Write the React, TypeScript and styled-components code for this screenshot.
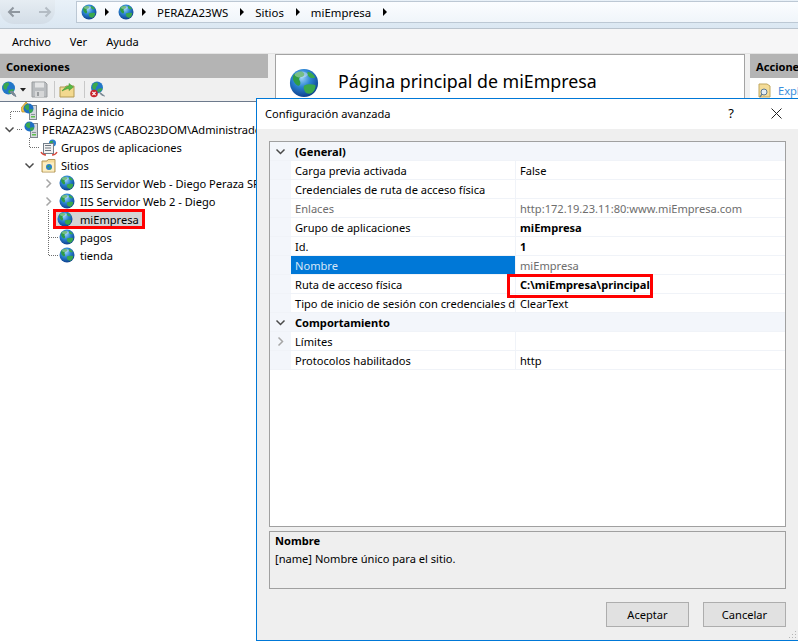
import React, { useId } from "react";
import styled, { createGlobalStyle } from "styled-components";

const Global = createGlobalStyle`
  html, body { margin: 0; padding: 0; height: 100%; overflow: hidden; background: #f0f0f0; }
  body { font-family: "Noto Sans", "Open Sans", sans-serif; font-size: 11.1px; color: #000; }
  #root { width: 798px; height: 641px; }
  * { box-sizing: border-box; }
`;

const Page = styled.div`
  position: relative;
  width: 798px;
  height: 641px;
  overflow: hidden;
  display: flex;
  flex-direction: column;
`;

/* ---- top navigation ---- */
const NavBar = styled.div`
  height: 29px;
  flex: none;
  display: flex;
  align-items: flex-start;
  background: linear-gradient(#e9f1f8, #dbe7f2);
  border-bottom: 1px solid #b9c3cd;
`;
const BackForward = styled.div`
  width: 55px;
  height: 24px;
  margin-right: 21px;
  flex: none;
  display: flex;
  align-items: center;
  justify-content: space-between;
  padding: 0 3px 0 7px;
  background: linear-gradient(#e6edf3, #d3dde7);
  border-radius: 0 0 14px 14px;
`;
const AddressBox = styled.div`
  flex: 1;
  height: 22px;
  margin-top: 1px;
  display: flex;
  align-items: center;
  padding-left: 4px;
  background: linear-gradient(#fbfdff, #f0f5fa);
  border: 1px solid #bcc8d4;
  border-right: none;
`;
const Crumb = styled.span`
  font-size: 11.4px;
  margin-right: 12px;
  white-space: nowrap;
`;
const CrumbArrow = styled.span<{ $gap: number }>`
  width: 0;
  height: 0;
  margin-right: ${(p) => p.$gap}px;
  border-left: 4px solid #000;
  border-top: 4px solid transparent;
  border-bottom: 4px solid transparent;
`;
const CrumbGlobe = styled.span`
  display: flex;
  margin-right: 8px;
`;

const MenuBar = styled.div`
  height: 25px;
  flex: none;
  display: flex;
  align-items: center;
  gap: 19px;
  padding-left: 12px;
  background: #f6f6f7;
  border-bottom: 1px solid #e4e4e4;
`;
const MenuItem = styled.span`
  font-size: 11.1px;
`;

/* ---- workspace behind the dialog ---- */
const Workspace = styled.div`
  flex: 1;
  display: flex;
  min-height: 0;
  background: #f0f0f0;
`;
const ConnectionsPanel = styled.section`
  width: 268px;
  flex: none;
  display: flex;
  flex-direction: column;
  background: #fff;
`;
const PanelHeader = styled.header`
  height: 24px;
  flex: none;
  display: flex;
  align-items: center;
  padding-left: 6px;
  background: #b4b4b4;
  font-weight: 700;
  font-size: 11.1px;
  white-space: nowrap;
  overflow: hidden;
`;
const Toolbar = styled.div`
  height: 24px;
  flex: none;
  display: flex;
  align-items: center;
  background: #f0f0f0;
  border-bottom: 1px solid #6d7a8c;
`;
const ToolSlot = styled.span<{ $w: number }>`
  display: flex;
  width: ${(p) => p.$w}px;
  flex: none;
  justify-content: center;
`;
const ToolSep = styled.span`
  width: 1px;
  height: 17px;
  background: #c8c8c8;
  flex: none;
`;
const Tree = styled.div`
  display: flex;
  flex-direction: column;
`;
const TreeRow = styled.div`
  height: 18px;
  display: flex;
  align-items: center;
  white-space: nowrap;
`;
const TreeIcon = styled.span<{ $w: number }>`
  display: flex;
  width: ${(p) => p.$w}px;
  flex: none;
  align-items: center;
`;
const TreeLabel = styled.span`
  font-size: 11.1px;
`;
const SelectedNode = styled.span`
  display: flex;
  align-items: center;
  height: 14px;
  width: 86px;
  padding-left: 1px;
  background: #d4d4d4;
  outline: 3px solid #f00;
`;

const MainPanel = styled.section`
  width: 470px;
  margin-left: 7px;
  flex: none;
  background: #fff;
  border: 1px solid #a3a3a3;
  display: flex;
  align-items: flex-start;
  padding: 13px 0 0 13px;
`;
const PageTitle = styled.h1`
  margin: 1px 0 0 19px;
  font-size: 17.8px;
  line-height: 24px;
  font-weight: 400;
  white-space: nowrap;
`;
const ActionsPanel = styled.section`
  width: 48px;
  margin-left: 5px;
  flex: none;
  background: #fff;
  display: flex;
  flex-direction: column;
  overflow: hidden;
`;
const ActionLink = styled.div`
  display: flex;
  align-items: center;
  gap: 7px;
  padding: 5px 0 0 8px;
  color: #3c8fdc;
  font-size: 11.1px;
`;

/* ---- dialog ---- */
const Dialog = styled.div`
  position: absolute;
  left: 256px;
  top: 98px;
  width: 543px;
  height: 543px;
  background: #efefef;
  border: 1px solid #0078d7;
  display: flex;
  flex-direction: column;
`;
const TitleBar = styled.div`
  height: 30px;
  flex: none;
  background: #fff;
  display: flex;
  align-items: center;
  padding: 0 0 2px 8px;
`;
const DialogTitle = styled.span`
  flex: 1;
  font-size: 11.1px;
`;
const HelpGlyph = styled.span`
  width: 46px;
  text-align: center;
  font-size: 13px;
`;
const CloseGlyph = styled.span`
  display: flex;
  width: 44px;
  justify-content: center;
`;
const DialogBody = styled.div`
  flex: 1;
  display: flex;
  flex-direction: column;
  padding: 12px 12px 9px 12px;
  min-height: 0;
`;
const Grid = styled.div`
  height: 386px;
  flex: none;
  background: #fff;
  border: 1px solid #a0a0a0;
  display: flex;
  flex-direction: column;
`;
const Row = styled.div<{ $category?: boolean }>`
  height: 19px;
  flex: none;
  display: grid;
  grid-template-columns: 21px 225px 1fr;
  align-items: stretch;
  border-bottom: 1px solid #f0f3f8;
  background: ${(p) => (p.$category ? "#f3f6fb" : "#fff")};
`;
const Gutter = styled.span`
  background: #f3f6fb;
  display: flex;
  align-items: center;
  justify-content: center;
`;
const NameCell = styled.span<{ $selected?: boolean; $muted?: boolean; $category?: boolean }>`
  display: flex;
  align-items: center;
  padding-left: 4px;
  white-space: nowrap;
  overflow: hidden;
  font-size: 11.1px;
  font-weight: ${(p) => (p.$category ? 700 : 400)};
  color: ${(p) => (p.$selected ? "#d5e7f8" : p.$muted ? "#6d6d6d" : "#000")};
  background: ${(p) => (p.$selected ? "#0078d7" : "transparent")};
  border-right: ${(p) => (p.$category ? "none" : "1px solid #f0f3f8")};
`;
const ValueCell = styled.span<{ $bold?: boolean; $muted?: boolean }>`
  position: relative;
  display: flex;
  align-items: center;
  padding-left: 4px;
  white-space: nowrap;
  font-size: 11.1px;
  font-weight: ${(p) => (p.$bold ? 700 : 400)};
  color: ${(p) => (p.$muted ? "#6d6d6d" : "#000")};
`;
const RedMark = styled.span`
  position: absolute;
  left: -9px;
  top: -1px;
  width: 146px;
  height: 24px;
  border: 3px solid #f00;
  pointer-events: none;
`;
const DescriptionBox = styled.div`
  height: 58px;
  flex: none;
  margin-top: 4px;
  border: 1px solid #a0a0a0;
  padding: 1px 5px;
  display: flex;
  flex-direction: column;
  gap: 2px;
  font-size: 11.1px;
`;
const DescTitle = styled.strong`
  font-weight: 700;
  line-height: 16px;
`;
const DescText = styled.span`
  line-height: 16px;
`;
const Buttons = styled.div`
  display: flex;
  justify-content: flex-end;
  gap: 14px;
  margin-top: 13px;
`;
const Button = styled.button`
  width: 83px;
  height: 25px;
  padding: 0;
  background: #e1e1e1;
  border: 1px solid #adadad;
  font-family: inherit;
  font-size: 11.1px;
  color: #000;
`;
const Grip = styled.svg`
  position: absolute;
  right: 1px;
  bottom: 1px;
`;

/* ---- drawings ---- */
const GlobeIcon = ({ size = 16 }: { size?: number }) => {
  const id = useId();
  return (
    <svg width={size} height={size} viewBox="0 0 32 32" style={{ flex: "none" }}>
      <defs>
        <radialGradient id={id} cx="42%" cy="32%" r="72%">
          <stop offset="0" stopColor="#9bd2f7" />
          <stop offset="0.45" stopColor="#2a83d3" />
          <stop offset="1" stopColor="#0b3a86" />
        </radialGradient>
      </defs>
      <circle cx="16" cy="16" r="15" fill={`url(#${id})`} />
      <path d="M5 7c3-2 6-4 9-3 2 1 3 2 2 4-1 2-4 1-5 3s2 3 1 6-3 2-5 0-4-6-2-10z" fill="#2f9c46" />
      <path d="M16 19c3-2 8-2 12-1 1 2-1 7-4 9-3 1-6 0-7-2s-2-4-1-6z" fill="#3aa84d" />
      <path d="M20 4c3 0 6 3 8 6-2 1-5 1-7-1-1-1-2-3-1-5z" fill="#3aa84d" />
      <ellipse cx="13" cy="7" rx="7" ry="3.2" fill="#ffffff" opacity="0.35" />
    </svg>
  );
};

const ServerIcon = ({ home }: { home?: boolean }) => (
  <svg width="20" height="18" viewBox="0 0 20 18" style={{ flex: "none" }}>
    {home && <path d="M0 6 5 0l6 6v4H1z" fill="#f1c34a" stroke="#b98a1e" strokeWidth="0.7" />}
    <rect x="8.500" y="3.500" width="7" height="14" fill="#d5d9dd" stroke="#7e868e" />
    <rect x="10" y="14" width="4" height="1.500" fill="#5fbf4f" />
    <rect x="10" y="12" width="4" height="1" fill="#8a929a" />
    <g transform="translate(2 1)">
      <circle cx="5.500" cy="5.500" r="5" fill="#1f6fc4" />
      <path d="M2 3c1-1 3-2 4-1s-1 2 0 3-1 3-2 2-3-2-2-4zM6 7c1-1 3-1 4-.5 0 1.500-1 3-2.500 3.500C6 9.500 5.500 8 6 7z" fill="#3aa84d" />
    </g>
  </svg>
);
const AppPoolIcon = () => (
  <svg width="18" height="17" viewBox="0 0 18 17" style={{ flex: "none" }}>
    <circle cx="12.500" cy="4" r="3.500" fill="#2a7fcf" />
    <path d="M10 2.500c1-1 3-1 3 0s-1 1.500-2 2-1.500-1-1-2z" fill="#3aa84d" />
    <rect x="3.500" y="4.500" width="10" height="10" fill="#f2f2f2" stroke="#76808a" />
    <path d="M5 6.500h6M5 9h6M5 11.500h6" stroke="#6e7881" strokeWidth="1" />
    <path d="M1 13c1 2 3 3 5 3M12 16c2 0 4-1 5-3" stroke="#d9473a" strokeWidth="1.400" fill="none" />
  </svg>
);
const SitesFolder = () => (
  <svg width="16" height="15" viewBox="0 0 16 15" style={{ flex: "none" }}>
    <path d="M1 3h5l1-1.500h7V14H1z" fill="#f6dc9a" stroke="#b3985a" />
    <rect x="2" y="4.500" width="11" height="9" fill="#fbeec4" />
    <circle cx="8" cy="9" r="3" fill="#2a7fcf" />
    <path d="M6.500 8c1-1 2-1 2 0s-1 1-1.500 1.500S6 9 6.500 8zM8.500 10c.7-.5 1.500-.5 2 0-.3.800-1 1.500-1.600 1.500-.5-.5-.7-1-.4-1.500z" fill="#3aa84d" />
  </svg>
);
const ConnectGlobe = () => (
  <svg width="17" height="17" viewBox="0 0 17 17">
    <circle cx="7.500" cy="7" r="6.500" fill="#2277c9" />
    <path d="M3 3c2-2 5-2 5 0s-2 2-2 4-2 2-3 1-1-3 0-5zM8 9c2-1 4-1 5-.5-.5 2-2 4-4 4S7 10 8 9z" fill="#3aa84d" />
    <path d="M9 11l3 3 3 1.500-1.500-3-2.500-2.500z" fill="#7c8a96" stroke="#7c8a96" />
  </svg>
);
const StopGlobe = () => (
  <svg width="17" height="17" viewBox="0 0 17 17">
    <circle cx="8" cy="6.500" r="6" fill="#2277c9" />
    <path d="M4 3c2-2 5-2 5 0s-2 2-2 4-2 2-3 1-1-3 0-5zM9 8c2-1 4-1 4.500-.5-.5 2-2 3.500-4 3.500S8 9 9 8z" fill="#3aa84d" />
    <path d="M10 11l3 2 2.500 2-3-1z" fill="#7c8a96" stroke="#7c8a96" />
    <circle cx="5" cy="12.500" r="3.800" fill="#c8242c" />
    <path d="M3.400 10.900l3.200 3.200M6.600 10.900l-3.200 3.200" stroke="#fff" strokeWidth="1.200" />
  </svg>
);
const Floppy = () => (
  <svg width="17" height="17" viewBox="0 0 17 17">
    <path d="M1 1h13l2 2v13H1z" fill="#b9bcbf" stroke="#9a9d9f" />
    <rect x="4" y="1.500" width="9" height="5" fill="#e4e5e6" />
    <rect x="4" y="10" width="9" height="6" fill="#d6d7d8" />
    <rect x="6" y="11" width="2" height="4" fill="#9a9d9f" />
  </svg>
);
const FolderUp = () => (
  <svg width="16" height="16" viewBox="0 0 16 16">
    <path d="M1 5h5l1-1h8v11H1z" fill="#f3d98f" stroke="#b39a55" />
    <path d="M3 9c2-3 5-5 7-5V1.500L14.500 5 10 8.500V6.500C8 6.500 5 8 3 9z" fill="#58b947" stroke="#3c8f2e" strokeWidth="0.5" />
  </svg>
);
const ExploreIcon = () => (
  <svg width="13" height="15" viewBox="0 0 13 15" style={{ flex: "none" }}>
    <path d="M1 1h8l3 2v11H1z" fill="#f4dc98" stroke="#c1a75f" />
    <circle cx="6" cy="9" r="3" fill="#e4eef6" stroke="#5d7a92" />
    <path d="M4 11l-2 3" stroke="#5d7a92" strokeWidth="1.300" />
  </svg>
);
const Chevron = ({ open, color = "#4a4a4a" }: { open?: boolean; color?: string }) => (
  <svg width="11" height="11" viewBox="0 0 11 11" style={{ flex: "none" }}>
    <path d={open ? "M1.500 3.500 5.500 7.500 9.500 3.500" : "M3.500 1.500 7.500 5.500 3.500 9.500"} fill="none" stroke={color} strokeWidth="1.500" />
  </svg>
);
/* Dotted connector lines of the tree, drawn at the head of each row. */
const TreeLines = ({ w, children }: { w: number; children?: React.ReactNode }) => (
  <svg width={w} height="18" viewBox={`0 0 ${w} 18`} style={{ flex: "none" }}>
    <g stroke="#6f6f6f" strokeDasharray="1 1" fill="none" shapeRendering="crispEdges">
      {children}
    </g>
  </svg>
);
const ArrowGlyph = ({ back }: { back?: boolean }) => (
  <svg width="14" height="12" viewBox="0 0 14 12">
    <path d={back ? "M13 6H2M6.500 1.500 2 6l4.500 4.500" : "M1 6h11M7.500 1.500 12 6l-4.500 4.500"} fill="none" stroke={back ? "#8f979f" : "#b4bcc4"} strokeWidth="2" />
  </svg>
);

const rows: { n: string; v?: string; bold?: boolean; muted?: boolean; sel?: boolean; valMuted?: boolean; cat?: boolean; more?: boolean; mark?: boolean }[] = [
  { n: "(General)", cat: true },
  { n: "Carga previa activada", v: "False" },
  { n: "Credenciales de ruta de acceso física", v: "" },
  { n: "Enlaces", v: "http:172.19.23.11:80:www.miEmpresa.com", muted: true, valMuted: true },
  { n: "Grupo de aplicaciones", v: "miEmpresa", bold: true },
  { n: "Id.", v: "1", bold: true },
  { n: "Nombre", v: "miEmpresa", sel: true, valMuted: true },
  { n: "Ruta de acceso física", v: "C:\\miEmpresa\\principal", bold: true, mark: true },
  { n: "Tipo de inicio de sesión con credenciales de ruta de acceso física", v: "ClearText" },
  { n: "Comportamiento", cat: true },
  { n: "Límites", v: "", more: true },
  { n: "Protocolos habilitados", v: "http" },
];

export default function App() {
  return (
    <Page>
      <Global />
      <NavBar>
        <BackForward>
          <ArrowGlyph back />
          <ArrowGlyph />
        </BackForward>
        <AddressBox>
          <CrumbGlobe><GlobeIcon size={16} /></CrumbGlobe>
          <CrumbArrow $gap={9} />
          <CrumbGlobe><GlobeIcon size={16} /></CrumbGlobe>
          <CrumbArrow $gap={11} />
          <Crumb>PERAZA23WS</Crumb>
          <CrumbArrow $gap={11} />
          <Crumb>Sitios</Crumb>
          <CrumbArrow $gap={11} />
          <Crumb>miEmpresa</Crumb>
          <CrumbArrow $gap={11} />
        </AddressBox>
      </NavBar>
      <MenuBar>
        <MenuItem>Archivo</MenuItem>
        <MenuItem>Ver</MenuItem>
        <MenuItem>Ayuda</MenuItem>
      </MenuBar>
      <Workspace>
        <ConnectionsPanel>
          <PanelHeader>Conexiones</PanelHeader>
          <Toolbar>
            <ToolSlot $w={18}><ConnectGlobe /></ToolSlot>
            <ToolSlot $w={10}>
              <svg width="6" height="4" viewBox="0 0 6 4"><path d="M0 0h6L3 3.500z" fill="#222" /></svg>
            </ToolSlot>
            <ToolSlot $w={23}><Floppy /></ToolSlot>
            <ToolSlot $w={3} />
            <ToolSep />
            <ToolSlot $w={24}><FolderUp /></ToolSlot>
            <ToolSlot $w={5} />
            <ToolSep />
            <ToolSlot $w={24}><StopGlobe /></ToolSlot>
          </Toolbar>
          <Tree>
            <TreeRow>
              <TreeLines w={21}><path d="M10.500 9.500V18M10.500 9.500H21" /></TreeLines>
              <TreeIcon $w={21}><ServerIcon home /></TreeIcon>
              <TreeLabel>Página de inicio</TreeLabel>
            </TreeRow>
            <TreeRow>
              <TreeIcon $w={4} />
              <Chevron open />
              <TreeLines w={7}><path d="M2 9.500H7" /></TreeLines>
              <TreeIcon $w={20}><ServerIcon /></TreeIcon>
              <TreeLabel>PERAZA23WS (CABO23DOM\Administrador)</TreeLabel>
            </TreeRow>
            <TreeRow>
              <TreeLines w={40}><path d="M29.500 0V9.500M29.500 9.500H40" /></TreeLines>
              <TreeIcon $w={21}><AppPoolIcon /></TreeIcon>
              <TreeLabel>Grupos de aplicaciones</TreeLabel>
            </TreeRow>
            <TreeRow>
              <TreeIcon $w={24} />
              <Chevron open />
              <TreeIcon $w={6} />
              <TreeIcon $w={20}><SitesFolder /></TreeIcon>
              <TreeLabel>Sitios</TreeLabel>
            </TreeRow>
            <TreeRow>
              <TreeIcon $w={43} />
              <Chevron color="#a6a6a6" />
              <TreeIcon $w={5} />
              <TreeIcon $w={21}><GlobeIcon size={16} /></TreeIcon>
              <TreeLabel>IIS Servidor Web - Diego Peraza SRL</TreeLabel>
            </TreeRow>
            <TreeRow>
              <TreeIcon $w={43} />
              <Chevron color="#a6a6a6" />
              <TreeIcon $w={5} />
              <TreeIcon $w={21}><GlobeIcon size={16} /></TreeIcon>
              <TreeLabel>IIS Servidor Web 2 - Diego</TreeLabel>
            </TreeRow>
            <TreeRow>
              <TreeLines w={56}><path d="M48.500 0V18" /></TreeLines>
              <SelectedNode>
                <TreeIcon $w={23}><GlobeIcon size={16} /></TreeIcon>
                <TreeLabel>miEmpresa</TreeLabel>
              </SelectedNode>
            </TreeRow>
            <TreeRow>
              <TreeLines w={59}><path d="M48.500 0V18M48.500 9.500H59" /></TreeLines>
              <TreeIcon $w={21}><GlobeIcon size={16} /></TreeIcon>
              <TreeLabel>pagos</TreeLabel>
            </TreeRow>
            <TreeRow>
              <TreeLines w={59}><path d="M48.500 0V9.500M48.500 9.500H59" /></TreeLines>
              <TreeIcon $w={21}><GlobeIcon size={16} /></TreeIcon>
              <TreeLabel>tienda</TreeLabel>
            </TreeRow>
          </Tree>
        </ConnectionsPanel>
        <MainPanel>
          <GlobeIcon size={30} />
          <PageTitle>Página principal de miEmpresa</PageTitle>
        </MainPanel>
        <ActionsPanel>
          <PanelHeader>Acciones</PanelHeader>
          <ActionLink><ExploreIcon />Explorar</ActionLink>
        </ActionsPanel>
      </Workspace>

      <Dialog>
        <TitleBar>
          <DialogTitle>Configuración avanzada</DialogTitle>
          <HelpGlyph>?</HelpGlyph>
          <CloseGlyph>
            <svg width="11" height="11" viewBox="0 0 11 11"><path d="M.5.500l10 10M10.500.500l-10 10" stroke="#222" strokeWidth="1" /></svg>
          </CloseGlyph>
        </TitleBar>
        <DialogBody>
          <Grid>
            {rows.map((r) => (
              <Row key={r.n} $category={r.cat}>
                <Gutter>
                  {r.cat && <Chevron open />}
                  {r.more && <Chevron color="#a6a6a6" />}
                </Gutter>
                <NameCell $category={r.cat} $selected={r.sel} $muted={r.muted}>{r.n}</NameCell>
                {!r.cat && (
                  <ValueCell $bold={r.bold} $muted={r.valMuted}>
                    {r.v}
                    {r.mark && <RedMark />}
                  </ValueCell>
                )}
              </Row>
            ))}
          </Grid>
          <DescriptionBox>
            <DescTitle>Nombre</DescTitle>
            <DescText>[name] Nombre único para el sitio.</DescText>
          </DescriptionBox>
          <Buttons>
            <Button>Aceptar</Button>
            <Button>Cancelar</Button>
          </Buttons>
        </DialogBody>
        <Grip width="10" height="10" viewBox="0 0 10 10">
          <path d="M8 2h1v1H8zM5 5h1v1H5zM8 5h1v1H8zM2 8h1v1H2zM5 8h1v1H5zM8 8h1v1H8z" fill="#b5b5b5" />
        </Grip>
      </Dialog>
    </Page>
  );
}
